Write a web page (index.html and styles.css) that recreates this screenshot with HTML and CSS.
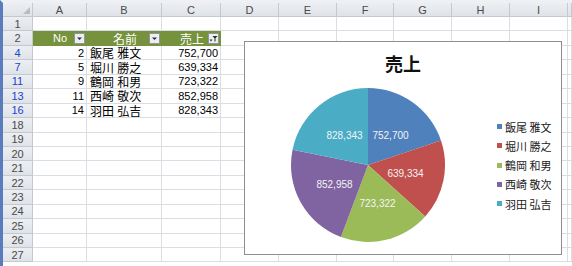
FILE: index.html
```html
<!DOCTYPE html>
<html lang="ja">

<head>
    <meta charset="UTF-8">
    <meta name="viewport" content="width=device-width, initial-scale=1.0">
    <title>売上</title>
    <link rel="stylesheet" href="styles.css">
</head>

<body>
    <div class="sheet" id="sheet">
        <!-- 列見出し -->
        <div class="c corner">
            <svg width="7" height="7" viewBox="0 0 7 7"><path d="M7 0v7H0z" fill="#b9bdc3"/></svg>
        </div>
        <div class="c col">A</div>
        <div class="c col">B</div>
        <div class="c col">C</div>
        <div class="c col">D</div>
        <div class="c col">E</div>
        <div class="c col">F</div>
        <div class="c col">G</div>
        <div class="c col">H</div>
        <div class="c col">I</div>
        <div class="c col"></div>

        <!-- 1 -->
        <div class="c rh">1</div>
        <div class="c"></div><div class="c"></div><div class="c"></div><div class="c"></div><div class="c"></div>
        <div class="c"></div><div class="c"></div><div class="c"></div><div class="c"></div><div class="c"></div>

        <!-- 2 テーブル見出し -->
        <div class="c rh">2</div>
        <div class="c th"><span class="th-a">No</span>
            <svg class="fb" viewBox="0 0 11 11"><rect x=".5" y=".5" width="10" height="10" fill="#eceef1" stroke="#8e959e"/><path d="M3 4.5h5l-2.5 2.5z" fill="#2b2b2b"/></svg>
        </div>
        <div class="c th"><span class="th-b">名前</span>
            <svg class="fb" viewBox="0 0 11 11"><rect x=".5" y=".5" width="10" height="10" fill="#eceef1" stroke="#8e959e"/><path d="M3 4.5h5l-2.5 2.5z" fill="#2b2b2b"/></svg>
        </div>
        <div class="c th"><span class="th-c">売上</span>
            <svg class="fb" viewBox="0 0 11 11"><rect x=".5" y=".5" width="10" height="10" fill="#eceef1" stroke="#8e959e"/><path d="M4.5 3h5l-2 2.3v3.2h-1v-3.2z" fill="#2b2b2b"/><path d="M1.5 6.5h3l-1.5 2z" fill="#2b2b2b"/></svg>
        </div>
        <div class="c"></div><div class="c"></div><div class="c"></div><div class="c"></div><div class="c"></div><div class="c"></div><div class="c"></div>

        <!-- データ -->
        <div class="c rh hl">4</div>
        <div class="c num">2</div><div class="c name">飯尾 雅文</div><div class="c num">752,700</div>
        <div class="c"></div><div class="c"></div><div class="c"></div><div class="c"></div><div class="c"></div><div class="c"></div><div class="c"></div>

        <div class="c rh hl">7</div>
        <div class="c num">5</div><div class="c name">堀川 勝之</div><div class="c num">639,334</div>
        <div class="c"></div><div class="c"></div><div class="c"></div><div class="c"></div><div class="c"></div><div class="c"></div><div class="c"></div>

        <div class="c rh hl">11</div>
        <div class="c num">9</div><div class="c name">鶴岡 和男</div><div class="c num">723,322</div>
        <div class="c"></div><div class="c"></div><div class="c"></div><div class="c"></div><div class="c"></div><div class="c"></div><div class="c"></div>

        <div class="c rh hl">13</div>
        <div class="c num">11</div><div class="c name">西崎 敬次</div><div class="c num">852,958</div>
        <div class="c"></div><div class="c"></div><div class="c"></div><div class="c"></div><div class="c"></div><div class="c"></div><div class="c"></div>

        <div class="c rh hl">16</div>
        <div class="c num">14</div><div class="c name">羽田 弘吉</div><div class="c num">828,343</div>
        <div class="c"></div><div class="c"></div><div class="c"></div><div class="c"></div><div class="c"></div><div class="c"></div><div class="c"></div>

        <!-- グラフ -->
        <div class="chart">
            <div class="chart-title">売上</div>
            <div class="chart-body">
                <svg class="pie" viewBox="0 0 156 156">
                    <path d="M78 78L78 1A77 77 0 0 1 150.97 53.4z" fill="#4f81bd"/>
                    <path d="M78 78L150.97 53.4A77 77 0 0 1 135.23 129.51z" fill="#c0504d"/>
                    <path d="M78 78L135.23 129.51A77 77 0 0 1 50.93 150.09z" fill="#9bbb59"/>
                    <path d="M78 78L50.93 150.09A77 77 0 0 1 2.54 62.7z" fill="#8064a2"/>
                    <path d="M78 78L2.54 62.7A77 77 0 0 1 78 1z" fill="#4bacc6"/>
                    <g class="pie-label">
                        <text x="100.5" y="48">752,700</text>
                        <text x="115.5" y="86">639,334</text>
                        <text x="87.5" y="116">723,322</text>
                        <text x="44.5" y="97">852,958</text>
                        <text x="54.5" y="48">828,343</text>
                    </g>
                </svg>
                <div class="legend">
                    <div class="legend-item"><span class="swatch s1"></span>飯尾 雅文</div>
                    <div class="legend-item"><span class="swatch s2"></span>堀川 勝之</div>
                    <div class="legend-item"><span class="swatch s3"></span>鶴岡 和男</div>
                    <div class="legend-item"><span class="swatch s4"></span>西崎 敬次</div>
                    <div class="legend-item"><span class="swatch s5"></span>羽田 弘吉</div>
                </div>
            </div>
        </div>
    </div>

    <script>
        // 空の行を追加
        const sheet = document.getElementById('sheet');
        for (let r = 18; r <= 27; r++) {
            const head = document.createElement('div');
            head.className = 'c rh';
            head.textContent = r;
            sheet.appendChild(head);
            for (let i = 0; i < 10; i++) {
                const cell = document.createElement('div');
                cell.className = 'c';
                sheet.appendChild(cell);
            }
        }
    </script>
</body>

</html>
```

FILE: styles.css
```css
body {
    margin: 0;
    height: 263px;
    overflow: hidden;
    border-left: 3px solid #5b7cbc;
    border-top: 3px solid #eef0f3;
    background-color: #ffffff;
    font-family: "Liberation Sans", "Noto Sans CJK JP", sans-serif;
    font-size: 11px;
    color: #000000;
}

.sheet {
    position: relative;
    display: grid;
    grid-template-columns: 30px 54px 75px 59px 58px 58px 57px 58px 58px 58px 1fr;
    grid-template-rows: 14px;
    grid-auto-rows: 14.45px;
}

.c {
    box-sizing: border-box;
    display: flex;
    align-items: center;
    border-right: 1px solid #dadde1;
    border-bottom: 1px solid #dadde1;
    white-space: nowrap;
    overflow: hidden;
}

/* 見出し */
.corner,
.col,
.rh {
    justify-content: center;
    background: linear-gradient(#eceef2, #dfe3e8);
    border-color: #c4c9d0;
    color: #4a4a4a;
}

.corner {
    justify-content: flex-end;
    align-items: flex-end;
    padding: 0 2px 2px 0;
}

.corner svg {
    display: block;
}

.rh.hl {
    color: #2043d2;
}

/* テーブル見出し */
.th {
    justify-content: flex-end;
    padding-right: 1px;
    background-color: #76923c;
    border-color: #76923c;
    color: #ffffff;
}

.th-a {
    margin-right: 7px;
}

.th-b {
    margin-right: 12px;
    font-size: 12px;
}

.th-c {
    margin-right: 4px;
    font-size: 12px;
}

.fb {
    display: block;
    width: 11px;
    height: 11px;
    flex: none;
}

.num {
    justify-content: flex-end;
    padding-right: 2px;
}

.name {
    padding-left: 3px;
    font-size: 12px;
}

/* グラフ */
.chart {
    position: absolute;
    left: 241px;
    top: 38px;
    width: 318px;
    height: 214px;
    box-sizing: border-box;
    padding-top: 9px;
    border: 1px solid #8f8f8f;
    background-color: #ffffff;
    font-family: "Noto Sans CJK JP", sans-serif;
}

.chart-title {
    font-size: 18px;
    font-weight: bold;
    line-height: 24px;
    text-align: center;
    color: #111111;
}

.chart-body {
    display: flex;
    align-items: center;
    margin-top: 12px;
}

.pie {
    flex: none;
    width: 156px;
    height: 156px;
    margin-left: 45px;
}

.pie-label text {
    font-family: "Liberation Sans", sans-serif;
    font-size: 10px;
    fill: #f3f3f3;
    text-anchor: middle;
    dominant-baseline: central;
}

.legend {
    display: flex;
    flex-direction: column;
    margin-left: 51px;
}

.legend-item {
    display: flex;
    align-items: center;
    gap: 3px;
    height: 19.25px;
    font-size: 11px;
    color: #222222;
}

.swatch {
    width: 5px;
    height: 5px;
}

.s1 { background-color: #4f81bd; }
.s2 { background-color: #c0504d; }
.s3 { background-color: #9bbb59; }
.s4 { background-color: #8064a2; }
.s5 { background-color: #4bacc6; }
```
